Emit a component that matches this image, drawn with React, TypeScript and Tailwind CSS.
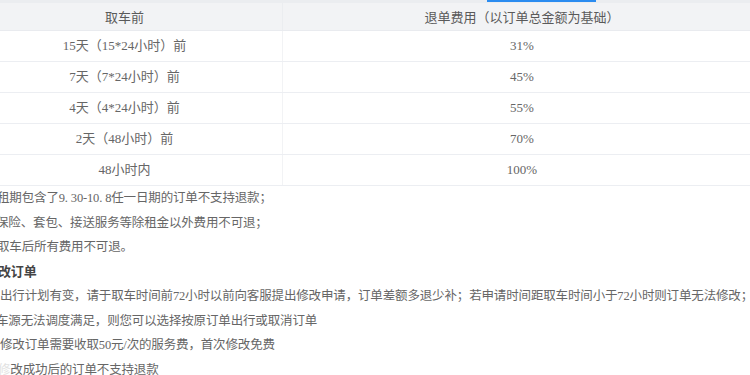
const rows = [
  { before: "15天（15*24小时）前", fee: "31%" },
  { before: "7天（7*24小时）前", fee: "45%" },
  { before: "4天（4*24小时）前", fee: "55%" },
  { before: "2天（48小时）前", fee: "70%" },
  { before: "48小时内", fee: "100%" },
];

const serif = "font-['Liberation_Serif','Noto_Sans_CJK_SC',serif]";

export default function App() {
  return (
    <div className="relative w-[750px] h-[375px] overflow-hidden bg-white text-[#666]">
      {/* active tab indicator peeking from above */}
      <div className="absolute top-0 left-[487px] w-[109px] h-[2px] bg-[#2b8cf0]" />

      {/* Cancellation table */}
      <div className="ml-[-33px] w-[794px] border-t-[3px] border-[#ebedf0]">
        <div className="grid grid-cols-[316px_478px] h-[28px] bg-[#f2f3f5] border-b border-[#e9ebef] text-[13px] text-[#5a5a5a] font-['Noto_Sans_CJK_SC',sans-serif]">
          <div className="flex items-center justify-center border-r border-[#ebedf0]">取车前</div>
          <div className="flex items-center justify-center">退单费用（以订单总金额为基础）</div>
        </div>
        {rows.map((row) => (
          <div
            key={row.before}
            className={`grid grid-cols-[316px_478px] h-[31px] border-b border-[#eceef2] text-[13px] text-[#666] ${serif}`}
          >
            <div className="flex items-center justify-center border-r border-[#f2f3f5]">{row.before}</div>
            <div className="flex items-center justify-center">{row.fee}</div>
          </div>
        ))}
      </div>

      {/* Notes */}
      <div className={`text-[12.5px] leading-[24.5px] tracking-[-0.15px] whitespace-nowrap text-[#666] ${serif}`}>
        <p className="ml-[-3px]">租期包含了9. 30-10. 8任一日期的订单不支持退款；</p>
        <p className="ml-[-4px]">保险、套包、接送服务等除租金以外费用不可退；</p>
        <p className="ml-[-3px]">取车后所有费用不可退。</p>
        <p className="ml-[-2px] text-[13px] font-bold text-[#444]">改订单</p>
        <p>出行计划有变，请于取车时间前72小时以前向客服提出修改申请，订单差额多退少补；若申请时间距取车时间小于72小时则订单无法修改；</p>
        <p className="ml-[-4px]">车源无法调度满足，则您可以选择按原订单出行或取消订单</p>
        <p>修改订单需要收取50元/次的服务费，首次修改免费</p>
        <p className="ml-[-2px]">
          <span className="text-[#e2e2e2]">修</span>改成功后的订单不支持退款
        </p>
      </div>
    </div>
  );
}
